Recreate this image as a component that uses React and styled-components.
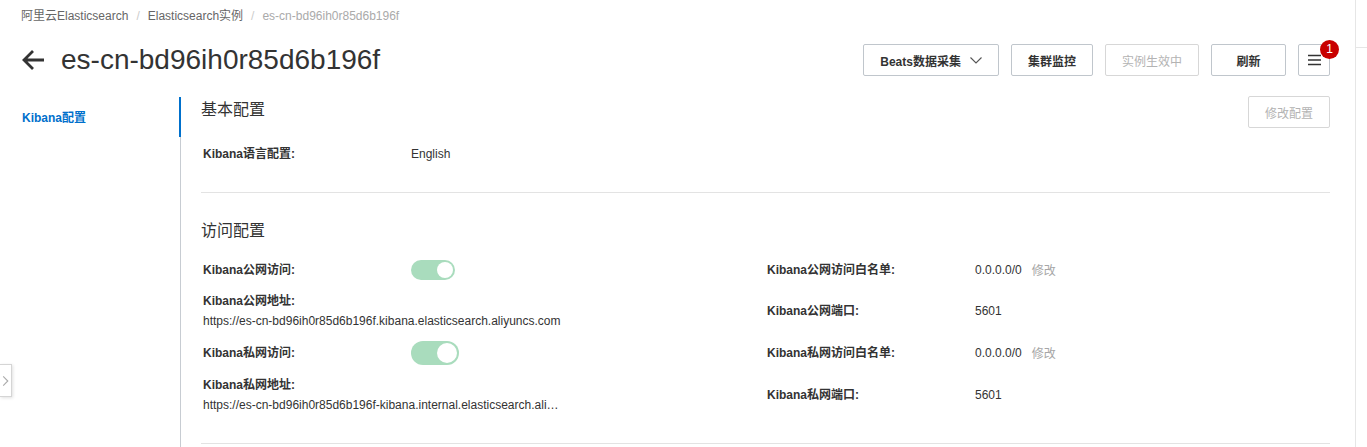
import React from "react";
import styled, { createGlobalStyle } from "styled-components";

const GlobalStyle = createGlobalStyle`
  html, body {
    margin: 0;
    padding: 0;
    background: #fff;
    overflow: hidden;
  }
  body {
    font-family: "Liberation Sans", "Noto Sans CJK SC", Arial, sans-serif;
    font-size: 12px;
    color: #333;
  }
`;

const crumbs = ["阿里云Elasticsearch", "Elasticsearch实例"];

const accessRows = [
  {
    left: { label: "Kibana公网访问:", toggle: "sm" },
    right: { label: "Kibana公网访问白名单:", value: "0.0.0.0/0", edit: true },
  },
  {
    left: {
      label: "Kibana公网地址:",
      url: "https://es-cn-bd96ih0r85d6b196f.kibana.elasticsearch.aliyuncs.com",
    },
    right: { label: "Kibana公网端口:", value: "5601" },
  },
  {
    left: { label: "Kibana私网访问:", toggle: "lg" },
    right: { label: "Kibana私网访问白名单:", value: "0.0.0.0/0", edit: true },
  },
  {
    left: {
      label: "Kibana私网地址:",
      url: "https://es-cn-bd96ih0r85d6b196f-kibana.internal.elasticsearch.aliyuncs.com",
    },
    right: { label: "Kibana私网端口:", value: "5601" },
  },
];

const BackArrow = () => (
  <svg width="24" height="22" viewBox="0 0 24 22" fill="none">
    <path
      d="M23 11H3M12 2L3 11l9 9"
      stroke="#333"
      strokeWidth="2.8"
      strokeLinejoin="miter"
    />
  </svg>
);

const Chevron = ({ dir = "down", color = "#555" }) => (
  <svg width="12" height="12" viewBox="0 0 12 12" fill="none">
    {dir === "down" ? (
      <path d="M0.5 3.5l5.5 5.5 5.5-5.5" stroke={color} strokeWidth="1.1" />
    ) : (
      <path d="M3.5 1l5 5-5 5" stroke={color} strokeWidth="1.2" />
    )}
  </svg>
);

const MenuIcon = () => (
  <svg width="13" height="12" viewBox="0 0 13 12" fill="none">
    <path d="M0 1.5h13M0 6h13M0 10.5h13" stroke="#333" strokeWidth="1.4" />
  </svg>
);

const renderCell = (cell) => {
  if (cell.url) {
    return (
      <Stack>
        <Label>{cell.label}</Label>
        <Url>{cell.url}</Url>
      </Stack>
    );
  }
  return (
    <Pair>
      <Label $w={208}>{cell.label}</Label>
      {cell.toggle ? (
        <Toggle $size={cell.toggle}>
          <Knob $size={cell.toggle} />
        </Toggle>
      ) : (
        <Value>
          {cell.value}
          {cell.edit && <EditLink>修改</EditLink>}
        </Value>
      )}
    </Pair>
  );
};

export default function App() {
  return (
    <>
      <GlobalStyle />
      <Page>
        <Main>
          <Breadcrumb>
            {crumbs.map((c) => (
              <React.Fragment key={c}>
                <Crumb>{c}</Crumb>
                <Sep>/</Sep>
              </React.Fragment>
            ))}
            <Crumb $current>es-cn-bd96ih0r85d6b196f</Crumb>
          </Breadcrumb>

          <TitleBar>
            <TitleGroup>
              <BackArrow />
              <Title>es-cn-bd96ih0r85d6b196f</Title>
            </TitleGroup>
            <Actions>
              <Button>
                Beats数据采集
                <Chevron />
              </Button>
              <Button>集群监控</Button>
              <Button disabled>实例生效中</Button>
              <Button $minWidth={75}>刷新</Button>
              <MenuButton>
                <MenuIcon />
                <Badge>1</Badge>
              </MenuButton>
            </Actions>
          </TitleBar>

          <Body>
            <Nav>
              <NavItem $active>Kibana配置</NavItem>
            </Nav>
            <Content>
              <Section>
                <SectionHead>
                  <SectionTitle>基本配置</SectionTitle>
                  <Button disabled>修改配置</Button>
                </SectionHead>
                <Pair>
                  <Label $w={208}>Kibana语言配置:</Label>
                  <Value>English</Value>
                </Pair>
              </Section>

              <Section $first={false}>
                <SectionHead>
                  <SectionTitle>访问配置</SectionTitle>
                </SectionHead>
                <AccessGrid>
                  {accessRows.map((row, i) => (
                    <React.Fragment key={i}>
                      <Cell>{renderCell(row.left)}</Cell>
                      <Cell>{renderCell(row.right)}</Cell>
                    </React.Fragment>
                  ))}
                </AccessGrid>
              </Section>
            </Content>
          </Body>

          <CollapseTab>
            <Chevron dir="right" color="#aaa" />
          </CollapseTab>
        </Main>
        <RightRail>
          <RailTop />
        </RightRail>
      </Page>
    </>
  );
}

const Page = styled.div`
  display: flex;
  width: 1367px;
  height: 447px;
  overflow: hidden;
`;

const Main = styled.div`
  position: relative;
  width: 1355px;
  flex-shrink: 0;
  padding-right: 25px;
  box-sizing: border-box;
`;

const RightRail = styled.div`
  flex: 1;
  border-left: 1px solid #e6e6e6;
`;

const RailTop = styled.div`
  height: 47px;
  border-bottom: 1px solid #e6e6e6;
`;

const Breadcrumb = styled.div`
  display: flex;
  align-items: center;
  height: 20px;
  margin-top: 6px;
  padding-left: 21px;
  font-size: 12px;
  line-height: 20px;
`;

const Crumb = styled.span`
  color: ${(p) => (p.$current ? "#aaa" : "#666")};
`;

const Sep = styled.span`
  color: #ccc;
  margin: 0 8px;
`;

const TitleBar = styled.div`
  display: flex;
  justify-content: space-between;
  align-items: center;
  height: 32px;
  margin-top: 18px;
  padding-left: 21px;
`;

const TitleGroup = styled.div`
  display: flex;
  align-items: center;
  gap: 16px;
`;

const Title = styled.h1`
  margin: 0;
  font-size: 28px;
  font-weight: 400;
  line-height: 32px;
  color: #333;
`;

const Actions = styled.div`
  display: flex;
  align-items: center;
  gap: 12px;
`;

const Button = styled.button`
  display: inline-flex;
  align-items: center;
  justify-content: center;
  gap: 9px;
  height: 32px;
  min-width: ${(p) => (p.$minWidth ? `${p.$minWidth}px` : "auto")};
  padding: 0 16px;
  box-sizing: border-box;
  background: #fff;
  border: 1px solid ${(p) => (p.disabled ? "#d7d7d7" : "#c0c6cc")};
  border-radius: 2px;
  font-family: inherit;
  font-size: 12px;
  font-weight: ${(p) => (p.disabled ? 400 : 700)};
  color: ${(p) => (p.disabled ? "#b3b3b3" : "#333")};
  cursor: ${(p) => (p.disabled ? "not-allowed" : "pointer")};
`;

const MenuButton = styled(Button)`
  position: relative;
  width: 32px;
  padding: 0;
`;

const Badge = styled.span`
  position: absolute;
  top: -5px;
  right: -10px;
  width: 19px;
  height: 19px;
  border-radius: 50%;
  background: #c80000;
  color: #fff;
  font-size: 12px;
  font-weight: 400;
  line-height: 19px;
  text-align: center;
`;

const Body = styled.div`
  display: flex;
  margin-top: 20px;
  height: 351px;
`;

const Nav = styled.div`
  width: 180px;
  flex-shrink: 0;
  border-right: 1px solid #c7ccd2;
  margin-top: 1px;
`;

const NavItem = styled.div`
  height: 40px;
  line-height: 42px;
  padding-left: 22px;
  margin-right: -1px;
  font-size: 12px;
  font-weight: 700;
  color: ${(p) => (p.$active ? "#0070cc" : "#333")};
  border-right: 2px solid ${(p) => (p.$active ? "#0070cc" : "transparent")};
`;

const Content = styled.div`
  flex: 1;
  padding-left: 20px;
`;

const Section = styled.div`
  padding: ${(p) => (p.$first === false ? "24px" : "0")} 0 28px;
  border-bottom: 1px solid #e3e3e3;
`;

const SectionHead = styled.div`
  display: flex;
  justify-content: space-between;
  align-items: flex-start;
  margin-bottom: 16px;
`;

const SectionTitle = styled.h2`
  margin: 2px 0 0;
  font-size: 16px;
  font-weight: 400;
  line-height: 24px;
  color: #333;
`;

const AccessGrid = styled.div`
  display: grid;
  grid-template-columns: 564px 1fr;
  row-gap: 10px;
  align-items: center;
  margin-top: 16px;
`;

const Cell = styled.div`
  display: flex;
  align-items: center;
`;

const Pair = styled.div`
  display: flex;
  align-items: center;
  padding-left: 2px;
  min-height: 20px;
`;

const Stack = styled.div`
  display: flex;
  flex-direction: column;
  padding-left: 2px;
`;

const Label = styled.span`
  width: ${(p) => (p.$w ? `${p.$w}px` : "auto")};
  flex-shrink: 0;
  font-size: 12px;
  font-weight: 700;
  line-height: 20px;
  color: #333;
`;

const Value = styled.span`
  display: flex;
  align-items: center;
  font-size: 12px;
  line-height: 20px;
  color: #333;
`;

const EditLink = styled.span`
  margin-left: 10px;
  padding-top: 2px;
  color: #a6a6a6;
`;

const Url = styled.span`
  max-width: 358px;
  overflow: hidden;
  white-space: nowrap;
  text-overflow: ellipsis;
  font-size: 12px;
  line-height: 20px;
  color: #333;
`;

const Toggle = styled.span`
  position: relative;
  display: inline-block;
  width: ${(p) => (p.$size === "lg" ? 48 : 44)}px;
  height: ${(p) => (p.$size === "lg" ? 24 : 20)}px;
  border-radius: 12px;
  background: #a9dcbd;
`;

const Knob = styled.span`
  position: absolute;
  top: 2px;
  right: 2px;
  width: ${(p) => (p.$size === "lg" ? 20 : 16)}px;
  height: ${(p) => (p.$size === "lg" ? 20 : 16)}px;
  border-radius: 50%;
  background: #fff;
`;

const CollapseTab = styled.div`
  position: absolute;
  left: 0;
  top: 364px;
  width: 12px;
  height: 33px;
  display: flex;
  align-items: center;
  justify-content: center;
  background: #fff;
  border: 1px solid #d5d5d5;
  border-left: none;
  box-sizing: border-box;
  box-shadow: 1px 1px 3px rgba(0, 0, 0, 0.12);
`;
